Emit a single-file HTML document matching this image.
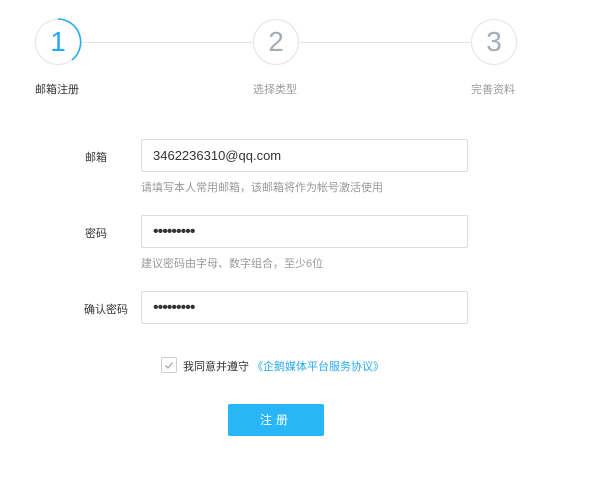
<html><head><style>
body{margin:0;width:600px;height:478px;background:#fff;font-family:"Liberation Sans","Noto Sans CJK SC",sans-serif;position:relative;overflow:hidden}
.a{position:absolute}
.c{position:absolute;width:44px;height:44px;border:1px solid #e3e3e3;border-radius:50%;text-align:center;line-height:44px;font-size:28px;color:#a5adb8;background:#fff}
.ln{position:absolute;top:42px;height:1px;background:#e3e3e3}
.st{position:absolute;top:81px;font-size:11px;color:#999}
.lb{position:absolute;font-size:11px;color:#333;left:85px}
.in{position:absolute;left:141px;border:1px solid #dcdcdc;border-radius:2px;font-size:13px;color:#333;line-height:31px;padding-left:11px;box-sizing:border-box;width:327px;height:33px}
.h{position:absolute;left:141px;font-size:11px;color:#999}
</style></head><body>
<div class="ln" style="left:82px;width:170px"></div>
<div class="ln" style="left:300px;width:170px"></div>
<div class="c" style="left:35px;top:19px;color:#29aaf0"></div>
<svg class="a" style="left:34px;top:18px" width="48" height="48"><path d="M24 1 A23 23 0 0 1 38 42" fill="none" stroke="#29aaf0" stroke-width="1.6"/></svg>
<div class="a" style="left:35px;top:19px;width:46px;height:46px;line-height:46px;text-align:center;font-size:28px;color:#29aaf0">1</div>
<div class="c" style="left:253px;top:19px">2</div>
<div class="c" style="left:471px;top:19px">3</div>
<div class="st" style="left:35px;color:#333">邮箱注册</div>
<div class="st" style="left:253px">选择类型</div>
<div class="st" style="left:471px">完善资料</div>
<div class="lb" style="top:149px">邮箱</div>
<div class="in" style="top:139px">3462236310@qq.com</div>
<div class="h" style="top:179px">请填写本人常用邮箱，该邮箱将作为帐号激活使用</div>
<div class="lb" style="top:225px">密码</div>
<div class="in" style="top:215px;font-size:16px;letter-spacing:-1px">•••••••••</div>
<div class="h" style="top:255px">建议密码由字母、数字组合，至少6位</div>
<div class="lb" style="top:301px;left:84px">确认密码</div>
<div class="in" style="top:291px;font-size:16px;letter-spacing:-1px">•••••••••</div>
<div class="a" style="left:161px;top:357px;width:14px;height:14px;border:1px solid #ccc;border-radius:2px"></div>
<svg class="a" style="left:161px;top:357px" width="16" height="16"><path d="M4.5 8.5 L7 11 L11.5 5.5" fill="none" stroke="#9aa" stroke-width="1.3"/></svg>
<div class="a" style="left:183px;top:358px;font-size:11px;color:#333">我同意并遵守 <span style="color:#29aaf0">《企鹅媒体平台服务协议》</span></div>
<div class="a" style="left:228px;top:404px;width:96px;height:32px;background:#29b6f6;border-radius:2px;color:#fff;font-size:12px;text-align:center;line-height:32px;letter-spacing:4px">注册</div>
</body></html>
